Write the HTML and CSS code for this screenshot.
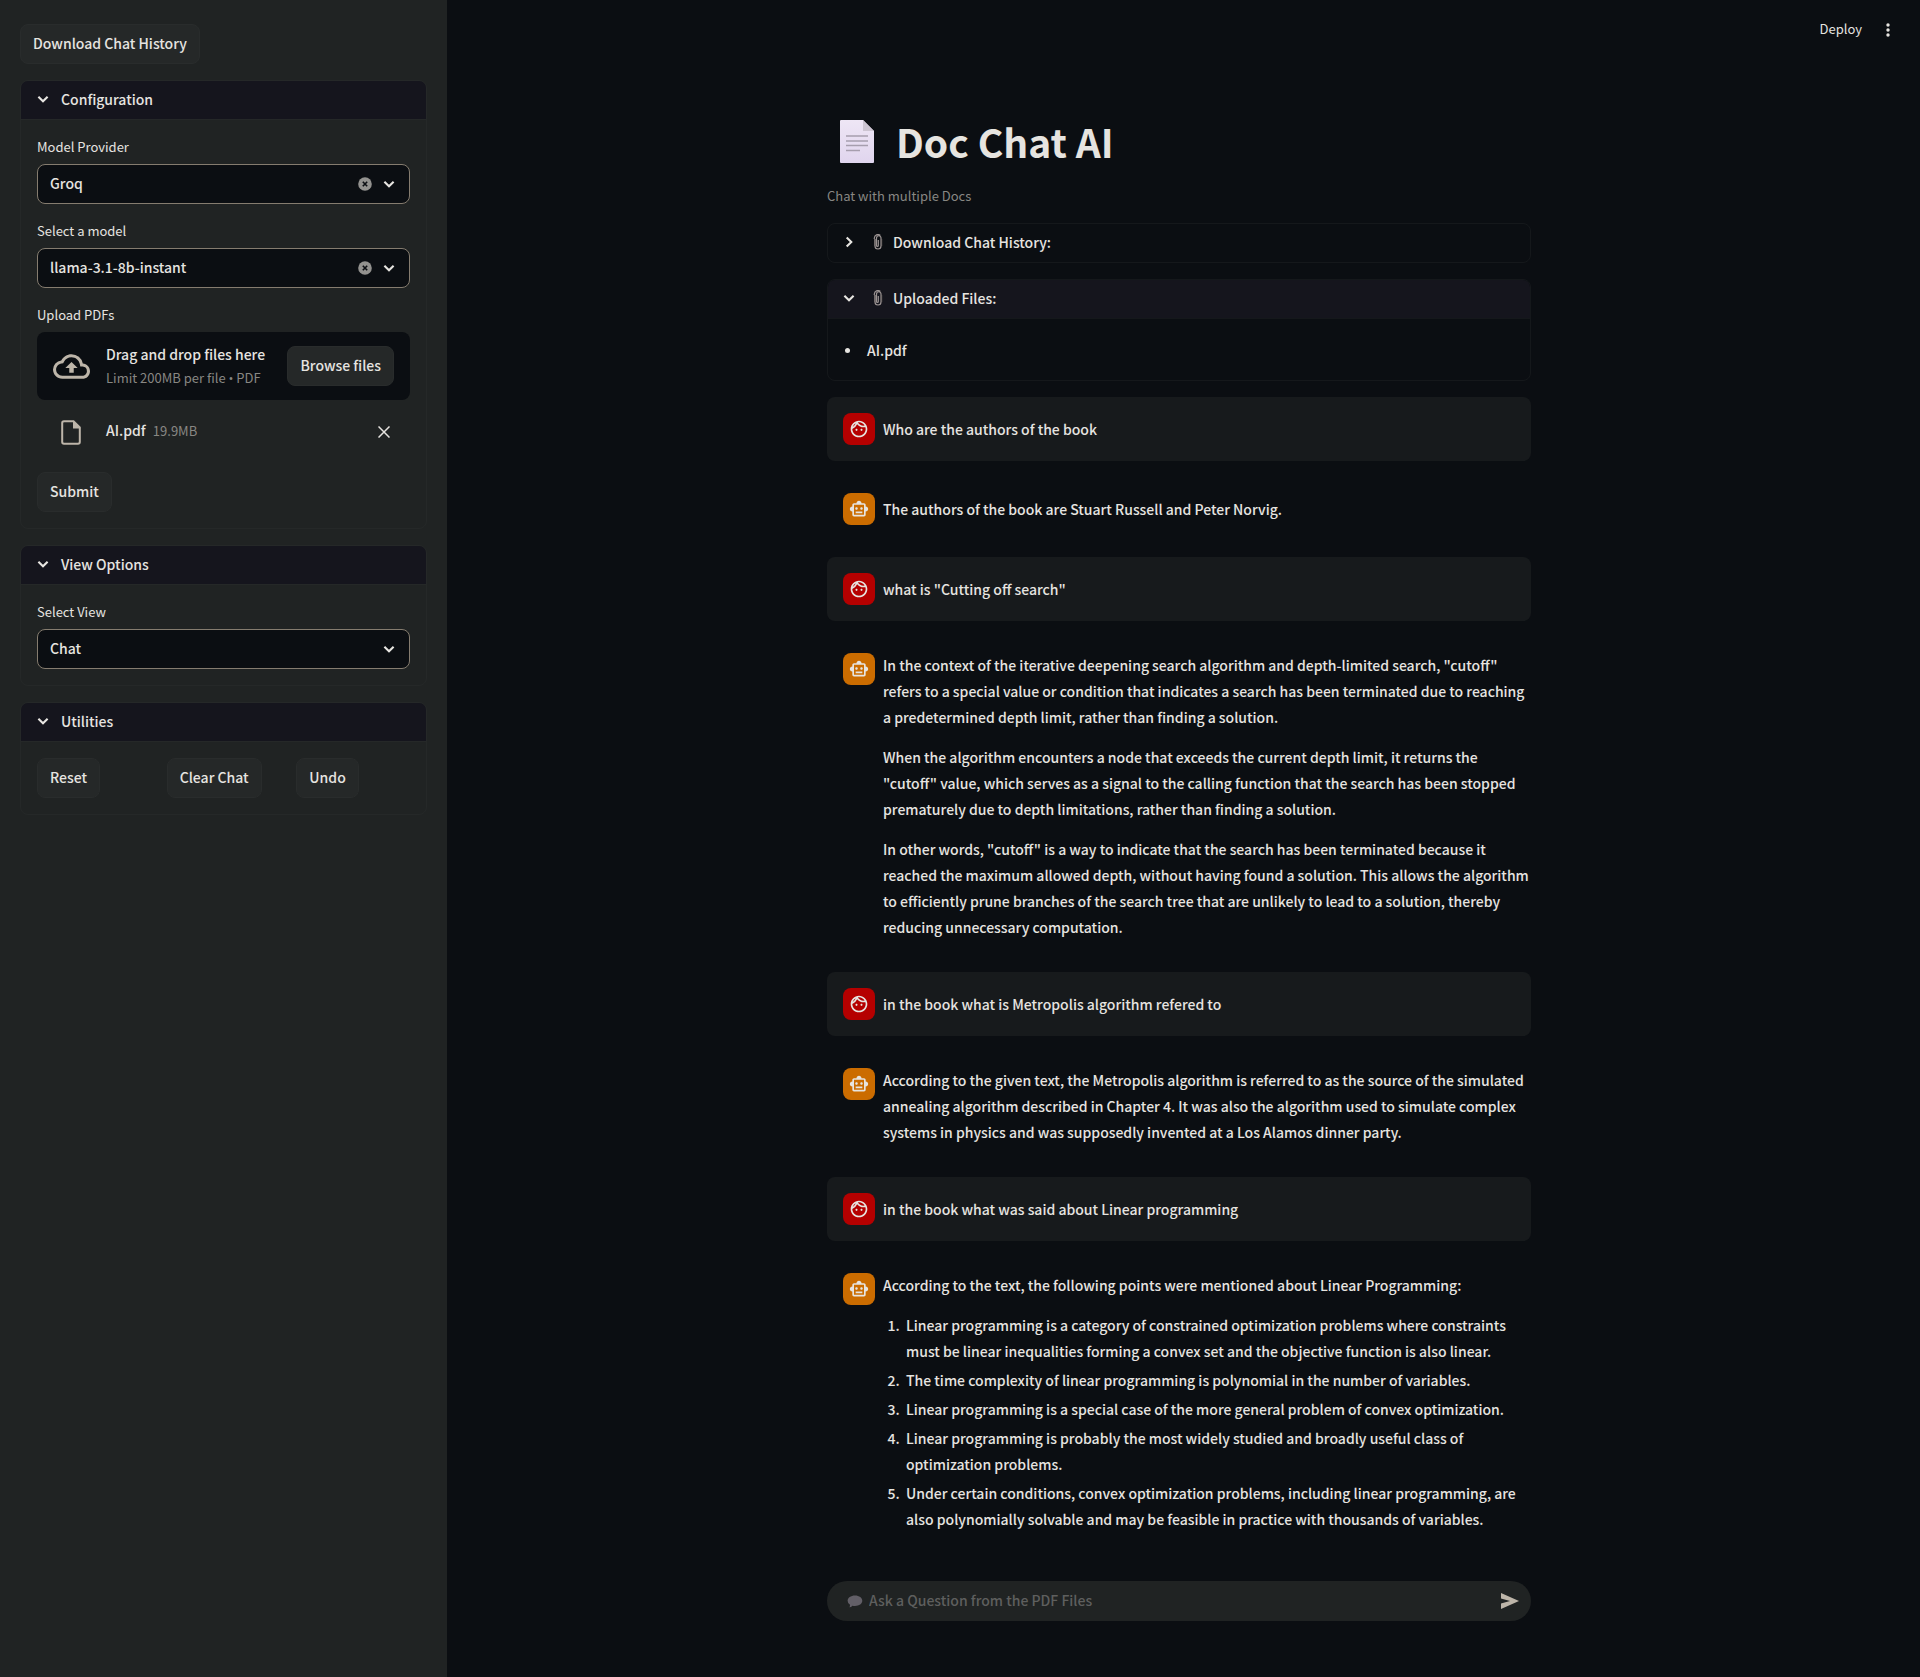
FILE: index.html
```html
<!DOCTYPE html>
<html lang="en">
<head>
<meta charset="utf-8">
<meta name="viewport" content="width=device-width, initial-scale=1">
<title>Doc Chat AI</title>
<link rel="stylesheet" href="styles.css">
</head>
<body>
<svg class="sprite" aria-hidden="true">
  <symbol id="chevron" viewBox="0 0 8 8"><path d="M1.7 2.85L4 5.15L6.3 2.85" fill="none" stroke="currentColor" stroke-width="1.05"/></symbol>
  <symbol id="face" viewBox="0 0 24 24"><path fill="currentColor" d="M10.25 13c0 .69-.56 1.25-1.25 1.25S7.75 13.69 7.75 13s.56-1.25 1.25-1.25 1.25.56 1.25 1.25zM15 11.75c-.69 0-1.25.56-1.25 1.25s.56 1.25 1.25 1.25 1.25-.56 1.25-1.25-.56-1.25-1.25-1.25zm7 .25c0 5.52-4.48 10-10 10S2 17.52 2 12 6.48 2 12 2s10 4.48 10 10zM10.66 4.12C12.06 6.44 14.6 8 17.5 8c.46 0 .91-.05 1.34-.12C17.44 5.56 14.9 4 12 4c-.46 0-.91.05-1.34.12zM4.42 9.47a8.046 8.046 0 003.66-4.44 8.046 8.046 0 00-3.66 4.44zM20 12c0-.78-.12-1.53-.33-2.24-.7.15-1.42.24-2.17.24a10 10 0 01-7.76-3.69A10.016 10.016 0 014 11.86c.01.04 0 .09 0 .14 0 4.41 3.59 8 8 8s8-3.59 8-8z"/></symbol>
  <symbol id="robot" viewBox="0 0 24 24"><path fill="currentColor" d="M20 9V7c0-1.1-.9-2-2-2h-3c0-1.66-1.34-3-3-3S9 3.34 9 5H6c-1.1 0-2 .9-2 2v2c-1.66 0-3 1.34-3 3s1.34 3 3 3v4c0 1.1.9 2 2 2h12c1.1 0 2-.9 2-2v-4c1.66 0 3-1.34 3-3s-1.34-3-3-3zm-2 10H6V7h12v12zm-9-6c-.83 0-1.5-.67-1.5-1.5S8.17 10 9 10s1.5.67 1.5 1.5S9.83 13 9 13zm7.5-1.5c0 .83-.67 1.5-1.5 1.5s-1.5-.67-1.5-1.5.67-1.5 1.5-1.5 1.5.67 1.5 1.5zM8 15h8v2H8v-2z"/></symbol>
  <symbol id="clear" viewBox="0 0 14 14"><circle cx="7" cy="7" r="6.8" fill="#93928f"/><path d="M4.8 4.8l4.4 4.4M9.2 4.8l-4.4 4.4" stroke="#0b0e12" stroke-width="1.6"/></symbol>
  <symbol id="clip" viewBox="0 0 10 16"><path d="M2 5v7a3 3 0 006 0V4a2 2 0 00-4.5 0v7.5a.9.9 0 001.8 0V6M1.3 5V4a3.6 3.6 0 016-2.5" fill="none" stroke="#9a9291" stroke-width="1.2"/><path d="M1.5 5v7M8.7 5v7" stroke="#77706f" stroke-width=".8"/></symbol>
</svg>
<div class="app">
  <aside class="sidebar">
    <button class="btn" type="button">Download Chat History</button>

    <details class="panel" open>
      <summary class="panel-head"><svg class="chev"><use href="#chevron"/></svg>Configuration</summary>
      <div class="panel-body">
        <div class="field">
          <label for="provider">Model Provider</label>
          <div class="select">
            <select id="provider"><option>Groq</option></select>
            <button class="clear" type="button" aria-label="Clear provider"><svg><use href="#clear"/></svg></button>
            <svg class="chev arrow"><use href="#chevron"/></svg>
          </div>
        </div>
        <div class="field">
          <label for="model">Select a model</label>
          <div class="select">
            <select id="model"><option>llama-3.1-8b-instant</option></select>
            <button class="clear" type="button" aria-label="Clear model"><svg><use href="#clear"/></svg></button>
            <svg class="chev arrow"><use href="#chevron"/></svg>
          </div>
        </div>
        <div class="field">
          <span class="label">Upload PDFs</span>
          <div class="dropzone">
            <svg class="cloud" viewBox="0 0 24 24"><path fill="currentColor" d="M19.35 10.04A7.49 7.49 0 0012 4C9.11 4 6.6 5.64 5.35 8.04A5.994 5.994 0 000 14c0 3.31 2.69 6 6 6h13c2.76 0 5-2.24 5-5 0-2.64-2.05-4.78-4.65-4.96zM19 18H6c-2.21 0-4-1.79-4-4 0-2.05 1.53-3.76 3.56-3.97l1.07-.11.5-.95A5.469 5.469 0 0112 6c2.62 0 4.88 1.86 5.39 4.43l.3 1.5 1.53.11A2.98 2.98 0 0122 15c0 1.65-1.35 3-3 3zM8 13h2.55v3h2.9v-3H16l-4-4z"/></svg>
            <div class="drop-text"><span>Drag and drop files here</span><small>Limit 200MB per file <span class="dot">•</span> PDF</small></div>
            <button class="btn" type="button">Browse files</button>
          </div>
          <div class="file">
            <svg class="file-icon" viewBox="0 0 20 25"><path d="M3 1.2h9.5L18.8 7.5V22q0 1.8-1.8 1.8H3Q1.2 23.8 1.2 22V3Q1.2 1.2 3 1.2z" fill="none" stroke="currentColor" stroke-width="2"/><path d="M12 1v7.5h7.5z" fill="currentColor"/></svg>
            <span class="file-name">AI.pdf <small>19.9MB</small></span>
            <button class="remove" type="button" aria-label="Remove file"><svg viewBox="0 0 12 12"><path d="M.5.5l11 11M11.5.5l-11 11" stroke="currentColor" stroke-width="1.5"/></svg></button>
          </div>
        </div>
        <button class="btn" type="button">Submit</button>
      </div>
    </details>

    <details class="panel" open>
      <summary class="panel-head"><svg class="chev"><use href="#chevron"/></svg>View Options</summary>
      <div class="panel-body">
        <div class="field">
          <label for="view">Select View</label>
          <div class="select">
            <select id="view"><option>Chat</option></select>
            <svg class="chev arrow"><use href="#chevron"/></svg>
          </div>
        </div>
      </div>
    </details>

    <details class="panel" open>
      <summary class="panel-head"><svg class="chev"><use href="#chevron"/></svg>Utilities</summary>
      <div class="panel-body columns">
        <button class="btn" type="button">Reset</button>
        <button class="btn" type="button">Clear Chat</button>
        <button class="btn" type="button">Undo</button>
      </div>
    </details>
  </aside>

  <main class="main">
    <header class="toolbar">
      <button class="deploy" type="button">Deploy</button>
      <button class="menu" type="button" aria-label="Menu"><svg viewBox="0 0 4 14" fill="currentColor"><circle cx="2" cy="2" r="1.7"/><circle cx="2" cy="7" r="1.7"/><circle cx="2" cy="12" r="1.7"/></svg></button>
    </header>
    <div class="content">
      <div class="intro">
        <h1 class="title">
          <svg class="doc" viewBox="0 0 34 43"><defs><linearGradient id="paper" x1="0" y1="0" x2="0" y2="1"><stop offset="0" stop-color="#eee6f5"/><stop offset="1" stop-color="#e0d5ee"/></linearGradient></defs><path d="M1 0h22l11 11v31q0 1-1 1H1q-1 0-1-1V1q0-1 1-1z" fill="url(#paper)"/><path d="M23 0l11 11H23z" fill="#cdc5d2"/><path d="M6 16h22M6 21h22M6 25.5h22M6 30.5h14" stroke="#a69eae" stroke-width="1.7"/></svg>
          Doc Chat AI
        </h1>
        <p class="caption">Chat with multiple Docs</p>
      </div>

      <details class="panel">
        <summary class="panel-head"><svg class="chev"><use href="#chevron"/></svg><svg class="clip"><use href="#clip"/></svg>Download Chat History:</summary>
      </details>
      <details class="panel" open>
        <summary class="panel-head"><svg class="chev"><use href="#chevron"/></svg><svg class="clip"><use href="#clip"/></svg>Uploaded Files:</summary>
        <div class="panel-body"><ul class="files"><li>AI.pdf</li></ul></div>
      </details>

      <article class="msg user"><span class="avatar"><svg><use href="#face"/></svg></span><div class="text"><p>Who are the authors of the book</p></div></article>
      <article class="msg bot"><span class="avatar"><svg><use href="#robot"/></svg></span><div class="text"><p>The authors of the book are Stuart Russell and Peter Norvig.</p></div></article>
      <article class="msg user"><span class="avatar"><svg><use href="#face"/></svg></span><div class="text"><p>what is "Cutting off search"</p></div></article>
      <article class="msg bot"><span class="avatar"><svg><use href="#robot"/></svg></span><div class="text">
        <p>In the context of the iterative deepening search algorithm and depth-limited search, "cutoff"<br>refers to a special value or condition that indicates a search has been terminated due to reaching<br>a predetermined depth limit, rather than finding a solution.</p>
        <p>When the algorithm encounters a node that exceeds the current depth limit, it returns the<br>"cutoff" value, which serves as a signal to the calling function that the search has been stopped<br>prematurely due to depth limitations, rather than finding a solution.</p>
        <p>In other words, "cutoff" is a way to indicate that the search has been terminated because it<br>reached the maximum allowed depth, without having found a solution. This allows the algorithm<br>to efficiently prune branches of the search tree that are unlikely to lead to a solution, thereby<br>reducing unnecessary computation.</p>
      </div></article>
      <article class="msg user"><span class="avatar"><svg><use href="#face"/></svg></span><div class="text"><p>in the book what is Metropolis algorithm refered to</p></div></article>
      <article class="msg bot"><span class="avatar"><svg><use href="#robot"/></svg></span><div class="text">
        <p>According to the given text, the Metropolis algorithm is referred to as the source of the simulated annealing algorithm described in Chapter 4. It was also the algorithm used to simulate complex systems in physics and was supposedly invented at a Los Alamos dinner party.</p>
      </div></article>
      <article class="msg user"><span class="avatar"><svg><use href="#face"/></svg></span><div class="text"><p>in the book what was said about Linear programming</p></div></article>
      <article class="msg bot"><span class="avatar"><svg><use href="#robot"/></svg></span><div class="text">
        <p>According to the text, the following points were mentioned about Linear Programming:</p>
        <ol>
          <li>Linear programming is a category of constrained optimization problems where constraints<br>must be linear inequalities forming a convex set and the objective function is also linear.</li>
          <li>The time complexity of linear programming is polynomial in the number of variables.</li>
          <li>Linear programming is a special case of the more general problem of convex optimization.</li>
          <li>Linear programming is probably the most widely studied and broadly useful class of<br>optimization problems.</li>
          <li>Under certain conditions, convex optimization problems, including linear programming, are<br>also polynomially solvable and may be feasible in practice with thousands of variables.</li>
        </ol>
      </div></article>
    </div>

    <form class="ask">
      <svg class="bubble" viewBox="0 0 16 13"><path d="M8 .5c4.2 0 7.3 2.3 7.3 5.3S12.2 11 8 11q-1.5 0-2.6-.3-1.2 1.5-3 1.5.7-1 .6-2.500Q.6 8.300.6 5.800C.6 2.800 3.800.5 8 .5z" fill="#625f67"/></svg>
      <input type="text" aria-label="Ask a Question from the PDF Files" placeholder="Ask a Question from the PDF Files">
      <button class="send" type="submit" aria-label="Send"><svg viewBox="0 0 18 16"><path d="M0 0l18 8L0 16v-5.5L9 8 0 5.5z" fill="currentColor"/></svg></button>
    </form>
  </main>
</div>
</body>
</html>
```

FILE: styles.css
```css
:root {
  --bg: #0b0e12;
  --side: #202323;
  --raised: #252828;
  --line: #252828;
  --head: #15151d;
  --text: #e6e4e0;
  --muted: #888783;
  --icon: #bdb5a9;
}

* { box-sizing: border-box; }

body {
  margin: 0;
  background: var(--bg);
  color: var(--text);
  font: 500 14px/26px "Noto Sans CJK SC", "Open Sans", sans-serif;
}

button, input, select { font: inherit; color: inherit; }
button { background: none; border: 0; padding: 0; cursor: pointer; }
svg { display: block; flex: none; }
p { margin: 0; }
small { font-size: 13px; font-weight: 400; color: var(--muted); }

.sprite { position: absolute; width: 0; height: 0; }
.app { display: flex; min-height: 100vh; }

.sidebar {
  flex: 0 0 447px;
  display: flex;
  flex-direction: column;
  align-items: flex-start;
  gap: 16px;
  padding: 24px 20px;
  background: var(--side);
}

.btn {
  height: 40px;
  padding: 0 12px 2px;
  background: var(--raised);
  border: 1px solid #292c2c;
  border-radius: 8px;
  white-space: nowrap;
}

.panel {
  width: 100%;
  border: 1px solid var(--line);
  border-radius: 8px;
  overflow: hidden;
}
.panel-head {
  display: flex;
  align-items: center;
  height: 38px;
  padding: 0 16px 2px;
  list-style: none;
  cursor: pointer;
}
.panel[open] > .panel-head { background: var(--head); }
.panel:not([open]) .chev { transform: rotate(-90deg); }
.chev { width: 16px; height: 16px; }
.panel-head .chev { margin-left: -2px; margin-right: 10px; }
.panel-body { padding: 16px; border-top: 1px solid var(--line); }
.sidebar .panel-body { display: flex; flex-direction: column; align-items: flex-start; gap: 16px; }
.sidebar .columns { display: grid; grid-template-columns: repeat(3, 1fr); justify-items: start; }

.field { width: 100%; }
.field label, .label {
  display: block;
  height: 28px;
  line-height: 22px;
  font-size: 13px;
  font-weight: 400;
}
.select { position: relative; }
.select select {
  display: block;
  width: 100%;
  height: 40px;
  padding: 0 56px 2px 12px;
  appearance: none;
  background: var(--bg);
  border: 1px solid #857c6f;
  border-radius: 8px;
}
.select .arrow { position: absolute; right: 13px; top: 12px; pointer-events: none; }
.clear { position: absolute; right: 38px; top: 13px; }
.clear svg { width: 14px; height: 14px; }

.dropzone {
  display: flex;
  align-items: center;
  height: 68px;
  padding: 0 16px;
  gap: 16px;
  background: var(--bg);
  border-radius: 8px;
}
.cloud { width: 37px; height: 37px; color: var(--icon); }
.drop-text { flex: 1; display: flex; flex-direction: column; white-space: nowrap; }
.drop-text span, .drop-text small { line-height: 24px; }
.drop-text .dot { font-family: "Open Sans", sans-serif; line-height: 1; }
.file { display: flex; align-items: center; height: 56px; padding: 8px 20px 0 24px; }
.file-icon { width: 20px; height: 25px; margin-right: 25px; color: var(--icon); }
.file-name { padding-bottom: 4px; }
.file small { margin-left: 4px; }
.remove { margin-left: auto; }
.remove svg { width: 12px; height: 12px; }

.main {
  flex: 1;
  min-width: 0;
  display: flex;
  flex-direction: column;
  padding-right: 9px;
}
.toolbar {
  display: flex;
  justify-content: flex-end;
  align-items: center;
  gap: 24px;
  height: 60px;
  padding-right: 21px;
}
.deploy { font-size: 13px; font-weight: 400; padding-bottom: 2px; }
.menu svg { width: 4px; height: 14px; }

.content, .ask { width: 100%; max-width: 704px; margin: 0 auto; }
.content { display: flex; flex-direction: column; gap: 16px; padding: 48px 0 24px; }
.intro { display: flex; flex-direction: column; gap: 11px; }
.title {
  display: flex;
  align-items: center;
  gap: 22px;
  margin: 0;
  padding-left: 13px;
  font-size: 39px;
  line-height: 66px;
  font-weight: 700;
}
.doc { width: 34px; height: 43px; }
.caption { font-size: 13px; font-weight: 400; line-height: 22px; color: var(--muted); }
.main .panel { border-color: #15181b; }
.main .panel-body { border-color: #15181b; }
.main .panel-head .chev { margin-left: -3px; margin-right: 16px; }
.clip { width: 10px; height: 16px; margin-right: 10px; }
.files { margin: 0; padding: 2px 0 1px 1px; list-style: none; }
.files li { display: flex; align-items: center; gap: 17px; }
.files li::before { content: ""; width: 5px; height: 5px; border-radius: 50%; background: currentColor; }

.msg { display: flex; gap: 8px; padding: 16px 0 16px 16px; border-radius: 8px; }
.user { background: #171a1c; }
.avatar {
  flex: none;
  display: grid;
  place-items: center;
  width: 32px;
  height: 32px;
  border-radius: 8px;
  background: #b50000;
}
.bot .avatar { background: #cb6c00; }
.avatar svg { width: 20px; height: 20px; }
.text {
  flex: 1;
  min-width: 0;
  min-height: 32px;
  margin-top: -1px;
  display: flex;
  flex-direction: column;
  justify-content: center;
  gap: 14px;
}
.text ol { display: flex; flex-direction: column; gap: 3px; margin: 0; padding-left: 23px; }
.text li::marker { content: counter(list-item) ".\00a0\00a0"; }

.ask {
  display: flex;
  align-items: center;
  height: 40px;
  margin-top: auto;
  margin-bottom: 56px;
  padding: 0 12px 0 20px;
  gap: 6px;
  background: var(--side);
  border-radius: 20px;
}
.ask input { flex: 1; min-width: 0; height: 38px; padding: 0 0 2px; border: 0; outline: 0; background: none; }
.ask input::placeholder { color: #5e5f5e; opacity: 1; }
.bubble { width: 16px; height: 13px; }
.send { color: var(--icon); }
.send svg { width: 18px; height: 16px; }
```
